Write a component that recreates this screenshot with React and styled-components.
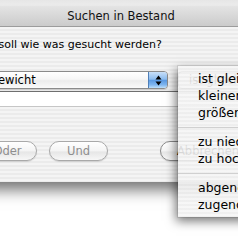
import React from "react";
import styled, { createGlobalStyle } from "styled-components";

const Global = createGlobalStyle`
  html, body { margin: 0; padding: 0; background: #fff; overflow: hidden; }
  * { box-sizing: border-box; }
`;

const font = `"DejaVu Sans", "Liberation Sans", sans-serif`;

const Desktop = styled.div`
  position: relative;
  width: 238px;
  height: 240px;
  overflow: hidden;
  background: linear-gradient(#e9e9e9 0, #ffffff 7px);
  font-family: ${font};
`;

const Window = styled.div`
  position: absolute;
  left: -120px;
  top: 6px;
  width: 482px;
  display: flex;
  flex-direction: column;
  box-shadow: 0 8px 14px rgba(0, 0, 0, 0.55);
  overflow: hidden;
`;

const TitleBar = styled.div`
  height: 21px;
  display: flex;
  align-items: center;
  justify-content: center;
  background: linear-gradient(#e4e4e4, #cbcbcb);
  border-bottom: 1px solid #9c9c9c;
  font-size: 11.5px;
  color: #111;
`;

const Body = styled.div`
  display: flex;
  flex-direction: column;
  padding: 10px 20px 21px 20px;
  background: repeating-linear-gradient(
    to bottom,
    #f4f4f4 0px,
    #f4f4f4 2px,
    #ebebeb 2px,
    #ebebeb 4px
  );
`;

const Prompt = styled.div`
  font-size: 11px;
  line-height: 16px;
  color: #000;
  padding-left: 78px;
  white-space: nowrap;
`;

const Row = styled.div`
  display: flex;
  align-items: center;
  gap: ${(p) => p.$gap || 10}px;
  padding-left: ${(p) => p.$indent || 0}px;
  margin-top: ${(p) => p.$top || 0}px;
`;

const Popup = styled.div`
  position: relative;
  width: ${(p) => (p.$width ? `${p.$width}px` : "auto")};
  flex: ${(p) => (p.$width ? "none" : 1)};
  height: 18px;
  display: flex;
  align-items: center;
  border: 1px solid #8b8b8b;
  border-radius: 4px;
  background: linear-gradient(#ffffff 0%, #f6f6f6 45%, #ececec 55%, #fafafa 100%);
  box-shadow: 0 1px 1px rgba(0, 0, 0, 0.15);
  font-size: 11.5px;
  color: #000;
  overflow: hidden;
`;

const PopupLabel = styled.span`
  flex: 1;
  padding-left: 10px;
`;

const Stepper = styled.div`
  width: 19px;
  height: 100%;
  display: flex;
  flex-direction: column;
  align-items: center;
  justify-content: center;
  border-left: 1px solid #4f7fb8;
  background: linear-gradient(
    #c9e0f9 0%,
    #8dbdf0 45%,
    #5b9ae3 52%,
    #7fb6f0 80%,
    #bfe0fb 100%
  );
`;

const TextField = styled.div`
  height: 16px;
  margin-top: 2px;
  background: #fff;
  border-top: 1px solid #6f6f6f;
  border-left: 1px solid #a8a8a8;
  border-right: 1px solid #a8a8a8;
  border-bottom: 1px solid #c6c6c6;
`;

const Button = styled.div`
  width: ${(p) => p.$width}px;
  height: 20px;
  border-radius: 10px;
  border: 1px solid ${(p) => (p.$disabled ? "#a9a9a9" : "#8a8a8a")};
  background: linear-gradient(#ffffff 0%, #f4f4f4 50%, #e6e6e6 55%, #f7f7f7 100%);
  box-shadow: 0 1px 1px rgba(0, 0, 0, 0.12);
  display: flex;
  align-items: center;
  justify-content: center;
  font-size: 11.5px;
  color: ${(p) => (p.$disabled ? "#8e8e8e" : "#000")};
  margin-left: ${(p) => p.$ml || 0}px;
`;

const Menu = styled.div`
  position: absolute;
  left: 178px;
  top: 66px;
  width: 150px;
  padding: 4px 0;
  background: repeating-linear-gradient(
    to bottom,
    rgba(246, 246, 246, 0.9) 0px,
    rgba(246, 246, 246, 0.9) 2px,
    rgba(238, 238, 238, 0.9) 2px,
    rgba(238, 238, 238, 0.9) 4px
  );
  box-shadow: -2px 4px 10px rgba(0, 0, 0, 0.55), 0 0 0 1px rgba(0, 0, 0, 0.08);
  font-family: ${font};
`;

const MenuItem = styled.div`
  height: 17px;
  line-height: 17px;
  padding-left: 20px;
  font-size: 12.5px;
  color: #000;
  white-space: nowrap;
`;

const MenuSeparator = styled.div`
  height: 12px;
  display: flex;
  align-items: center;
  &::after {
    content: "";
    display: block;
    width: 100%;
    height: 1px;
    background: #d0d0d0;
  }
`;

const Arrows = () => (
  <svg width="7" height="11" viewBox="0 0 7 11">
    <path d="M3.5 0.5 L6.5 4.5 L0.5 4.5 Z" fill="#000" />
    <path d="M3.5 10.5 L6.5 6.5 L0.5 6.5 Z" fill="#000" />
  </svg>
);

export default function App() {
  return (
    <>
      <Global />
      <Desktop>
        <Window>
          <TitleBar>Suchen in Bestand</TitleBar>
          <Body>
            <Prompt>Wo soll wie was gesucht werden?</Prompt>
            <Row $top={18} $indent={78}>
              <Popup $width={190}>
                <PopupLabel>Gewicht</PopupLabel>
                <Stepper>
                  <Arrows />
                </Stepper>
              </Popup>
              <Popup>
                <PopupLabel>ist gleich</PopupLabel>
                <Stepper>
                  <Arrows />
                </Stepper>
              </Popup>
            </Row>
            <TextField />
            <Row $top={34} $gap={12} $indent={78}>
              <Button $width={59} $disabled>Oder</Button>
              <Button $width={59} $disabled>Und</Button>
              <Button $width={96} $ml={40}>Abbrechen</Button>
              <Button $width={74}>Suchen</Button>
            </Row>
          </Body>
        </Window>
        <Menu>
          <MenuItem>ist gleich</MenuItem>
          <MenuItem>kleiner als</MenuItem>
          <MenuItem>größer als</MenuItem>
          <MenuSeparator />
          <MenuItem>zu niedrig</MenuItem>
          <MenuItem>zu hoch</MenuItem>
          <MenuSeparator />
          <MenuItem>abgenommen</MenuItem>
          <MenuItem>zugenommen</MenuItem>
        </Menu>
      </Desktop>
    </>
  );
}
